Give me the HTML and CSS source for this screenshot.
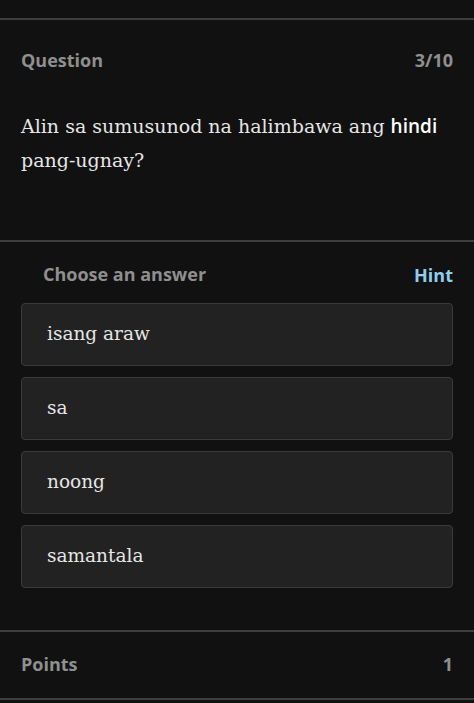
FILE: index.html
```html
<!doctype html>
<html lang="tl">
<head>
  <meta charset="utf-8">
  <meta name="viewport" content="width=device-width, initial-scale=1">
  <title>Question 3/10</title>
  <link rel="stylesheet" href="styles.css">
</head>
<body>
  <section class="question-card">
    <div class="card-row">
      <h2 class="label">Question</h2>
      <span class="label">3/10</span>
    </div>
    <p class="question-text">Alin sa sumusunod na halimbawa ang <strong>hindi</strong> <span class="nowrap">pang-ugnay?</span></p>
  </section>

  <section class="answers">
    <div class="answers-head">
      <h2 class="label">Choose an answer</h2>
      <button class="hint" type="button">Hint</button>
    </div>
    <ul class="options">
      <li class="option">isang araw</li>
      <li class="option">sa</li>
      <li class="option">noong</li>
      <li class="option">samantala</li>
    </ul>
  </section>

  <footer class="points">
    <h2 class="label">Points</h2>
    <span class="label">1</span>
  </footer>
</body>
</html>
```

FILE: styles.css
```css
:root {
  --bg: #111111;
  --rule: #3d3d3d;
  --label: #8f8f8f;
  --text: #e6e6e6;
  --option-bg: #222222;
  --option-border: #3a3a3a;
  --hint: #8fcdef;
}

*,
*::after,
*::before {
  box-sizing: border-box;
}

body {
  background: var(--bg);
  color: var(--text);
  font: 18px/1.4 "Open Sans", "Liberation Sans", sans-serif;
  margin: 0;
  padding-top: 18px;
}

.label {
  color: var(--label);
  font-size: 18px;
  font-weight: 700;
  margin: 0;
}

.question-card {
  border-top: 2px solid var(--rule);
  padding: 28px 21px 0;
  height: 222px;
}

.card-row,
.answers-head,
.points {
  align-items: center;
  display: flex;
  justify-content: space-between;
}

.question-text {
  font: 19px/34px "DejaVu Serif", serif;
  margin: 36px 0 0;
}

.question-text strong {
  color: #fff;
  font-family: "Open Sans", sans-serif;
  font-size: 19px;
  font-weight: 600;
}

.nowrap {
  white-space: nowrap;
}

.answers {
  border-top: 2px solid var(--rule);
  padding: 20px 21px 0;
  height: 390px;
}

.answers-head {
  padding-left: 22px;
}

.hint {
  background: none;
  border: 0;
  color: var(--hint);
  cursor: pointer;
  font: 700 18px "Open Sans", sans-serif;
  padding: 0;
}

.options {
  display: flex;
  flex-direction: column;
  gap: 11px;
  list-style: none;
  margin: 16px 0 0;
  padding: 0;
}

.option {
  background: var(--option-bg);
  border: 1px solid var(--option-border);
  border-radius: 4px;
  font: 18.5px/1 "DejaVu Serif", serif;
  height: 63px;
  padding: 21px 25px;
}

.points {
  border-top: 2px solid var(--rule);
  border-bottom: 2px solid var(--rule);
  height: 70px;
  padding: 0 21px;
}
```
